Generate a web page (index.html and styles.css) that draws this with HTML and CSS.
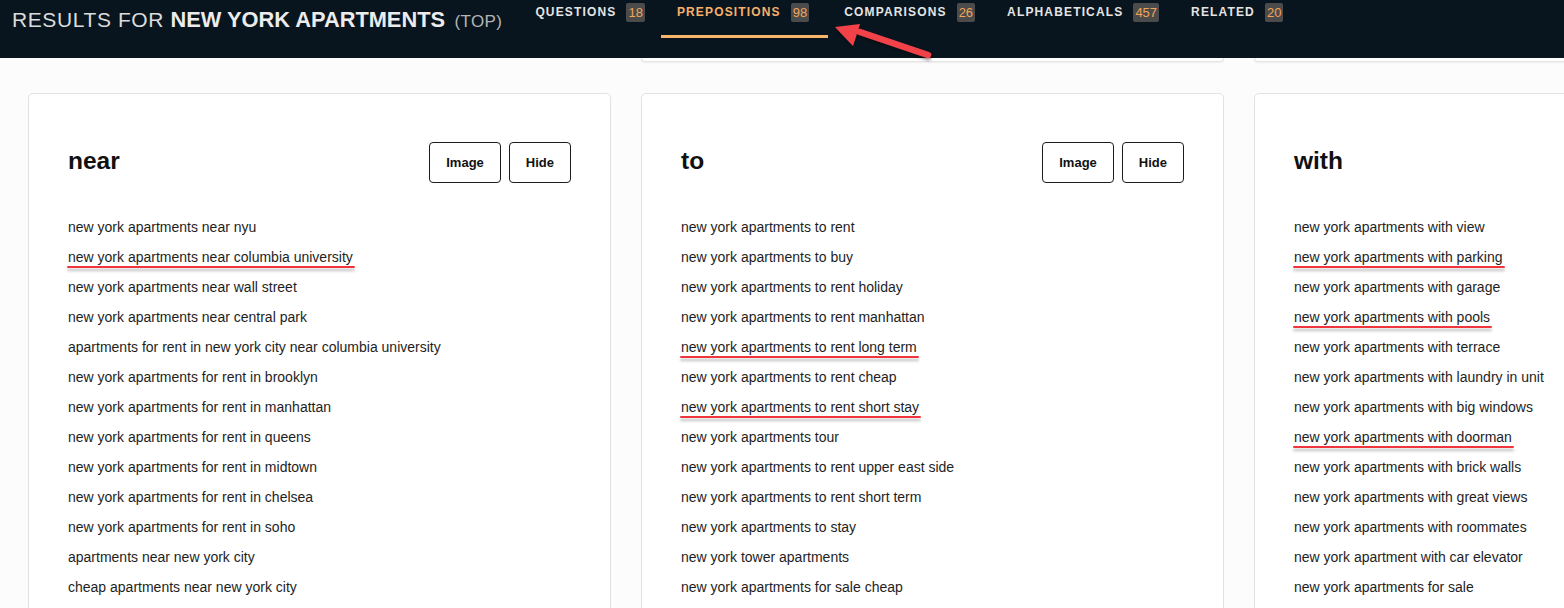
FILE: index.html
```html
<!DOCTYPE html>
<html lang="en">
<head>
<meta charset="utf-8">
<title>Results for new york apartments</title>
<link rel="stylesheet" href="styles.css">
</head>
<body>
<header class="topbar">
  <h1 class="title">RESULTS FOR <strong>NEW YORK APARTMENTS</strong> <span class="sub">(TOP)</span></h1>
  <nav class="tabs">
    <a class="tab">QUESTIONS <span class="badge">18</span></a>
    <a class="tab active">PREPOSITIONS <span class="badge">98</span></a>
    <a class="tab">COMPARISONS <span class="badge">26</span></a>
    <a class="tab">ALPHABETICALS <span class="badge">457</span></a>
    <a class="tab">RELATED <span class="badge">20</span></a>
  </nav>
</header>
<div class="stubs">
  <div class="stub hidden"></div><div class="stub"></div><div class="stub"></div>
</div>
<main class="cards">
  <section class="card">
    <div class="card-head">
      <h2>near</h2>
      <div class="actions"><button class="btn">Image</button><button class="btn">Hide</button></div>
    </div>
    <ul class="list">
      <li>new york apartments near nyu</li>
      <li><span class="mark">new york apartments near columbia university</span></li>
      <li>new york apartments near wall street</li>
      <li>new york apartments near central park</li>
      <li>apartments for rent in new york city near columbia university</li>
      <li>new york apartments for rent in brooklyn</li>
      <li>new york apartments for rent in manhattan</li>
      <li>new york apartments for rent in queens</li>
      <li>new york apartments for rent in midtown</li>
      <li>new york apartments for rent in chelsea</li>
      <li>new york apartments for rent in soho</li>
      <li>apartments near new york city</li>
      <li>cheap apartments near new york city</li>
    </ul>
  </section>
  <section class="card">
    <div class="card-head">
      <h2>to</h2>
      <div class="actions"><button class="btn">Image</button><button class="btn">Hide</button></div>
    </div>
    <ul class="list">
      <li>new york apartments to rent</li>
      <li>new york apartments to buy</li>
      <li>new york apartments to rent holiday</li>
      <li>new york apartments to rent manhattan</li>
      <li><span class="mark">new york apartments to rent long term</span></li>
      <li>new york apartments to rent cheap</li>
      <li><span class="mark">new york apartments to rent short stay</span></li>
      <li>new york apartments tour</li>
      <li>new york apartments to rent upper east side</li>
      <li>new york apartments to rent short term</li>
      <li>new york apartments to stay</li>
      <li>new york tower apartments</li>
      <li>new york apartments for sale cheap</li>
    </ul>
  </section>
  <section class="card">
    <div class="card-head">
      <h2>with</h2>
      <div class="actions"><button class="btn">Image</button><button class="btn">Hide</button></div>
    </div>
    <ul class="list">
      <li>new york apartments with view</li>
      <li><span class="mark">new york apartments with parking</span></li>
      <li>new york apartments with garage</li>
      <li><span class="mark">new york apartments with pools</span></li>
      <li>new york apartments with terrace</li>
      <li>new york apartments with laundry in unit</li>
      <li>new york apartments with big windows</li>
      <li><span class="mark">new york apartments with doorman</span></li>
      <li>new york apartments with brick walls</li>
      <li>new york apartments with great views</li>
      <li>new york apartments with roommates</li>
      <li>new york apartment with car elevator</li>
      <li>new york apartments for sale</li>
    </ul>
  </section>
</main>
<svg class="arrow" width="120" height="60" viewBox="0 0 120 60" aria-hidden="true">
  <defs>
    <filter id="sh" x="-20%" y="-20%" width="140%" height="160%">
      <feDropShadow dx="0" dy="2" stdDeviation="1.5" flood-color="#000" flood-opacity="0.45"/>
    </filter>
  </defs>
  <g filter="url(#sh)">
    <line x1="106" y1="33" x2="38" y2="10" stroke="#f2434a" stroke-width="6.5" stroke-linecap="round"/>
    <polygon points="13,5 38,2 31,24" fill="#f2434a"/>
  </g>
</svg>
</body>
</html>
```
FILE: styles.css
```css
* { box-sizing: border-box; }
html, body { margin: 0; padding: 0; }
body {
  background: #fcfcfc;
  font-family: "Liberation Sans", Arial, sans-serif;
  color: #1e1e1e;
  width: 1564px;
  height: 608px;
  overflow: hidden;
  position: relative;
}
.topbar {
  height: 58px;
  background: #08151e;
  display: flex;
  align-items: flex-start;
  padding-left: 12px;
  position: relative;
  z-index: 2;
}
.title {
  margin: 0;
  padding-top: 8px;
  font-size: 21px;
  font-weight: normal;
  color: #dcdcdc;
  line-height: 24px;
  white-space: nowrap;
  letter-spacing: 0.6px;
}
.title strong { font-weight: bold; font-size: 21.8px; color: #ececec; letter-spacing: 0; }
.title .sub { font-size: 17px; color: #b5b5b5; margin-left: 3px; letter-spacing: 0.4px; }
.tabs {
  display: flex;
  margin-left: 17px;
}
.tab {
  display: flex;
  align-items: flex-start;
  gap: 10px;
  padding: 3px 16px 0 16px;
  height: 38px;
  font-size: 12px;
  font-weight: bold;
  letter-spacing: 1.15px;
  color: #e4e4e4;
  line-height: 19px;
  border-bottom: 3px solid transparent;
  white-space: nowrap;
}
.tab.active { color: #f7b06a; border-bottom-color: #f9b46c; padding-right: 19px; }
.badge {
  display: inline-block;
  background: #4b4b4b;
  color: #f2a458;
  font-weight: normal;
  font-size: 13px;
  letter-spacing: 0;
  line-height: 19px;
  height: 19px;
  padding: 0 2px;
  border-radius: 2px;
}
.stubs {
  display: grid;
  grid-template-columns: repeat(3, 583px);
  gap: 30px;
  padding-left: 28px;
  position: relative;
  z-index: 1;
}
.stub {
  height: 4px;
  background: #fff;
  border: 1px solid #e4e4e4;
  border-top: none;
  border-radius: 0 0 4px 4px;
  box-shadow: 0 1px 2px rgba(0,0,0,0.06);
}
.stub.hidden { visibility: hidden; }
.cards {
  display: grid;
  grid-template-columns: repeat(3, 583px);
  gap: 30px;
  padding: 31px 0 0 28px;
}
.card {
  background: #fff;
  border: 1px solid #e2e2e2;
  border-radius: 5px;
  padding: 48px 39px 40px 39px;
  min-height: 560px;
}
.card-head {
  display: flex;
  align-items: center;
  justify-content: space-between;
  height: 41px;
}
.card-head h2 {
  margin: 0;
  font-size: 24.5px;
  font-weight: bold;
  color: #111;
  line-height: 30px;
  padding-bottom: 4px;
}
.actions { display: flex; gap: 8px; }
.btn {
  height: 41px;
  padding: 0 16px;
  background: #fff;
  border: 1px solid #1c1c1c;
  border-radius: 4px;
  font-family: "Liberation Sans", Arial, sans-serif;
  font-size: 13px;
  font-weight: bold;
  color: #111;
}
.list {
  list-style: none;
  margin: 29px 0 0 0;
  padding: 0;
}
.list li {
  height: 30px;
  line-height: 30px;
  font-size: 14px;
  color: #1e1e1e;
  white-space: nowrap;
}
.mark {
  display: inline-block;
  position: relative;
}
.mark::after {
  content: "";
  position: absolute;
  left: -1px;
  right: -2px;
  bottom: 4px;
  height: 2.5px;
  background: #f0353c;
  border-radius: 2px;
  box-shadow: 0 3px 3px rgba(0,0,0,0.28);
}
.arrow {
  position: absolute;
  left: 822px;
  top: 22px;
  z-index: 5;
  overflow: visible;
}
```
